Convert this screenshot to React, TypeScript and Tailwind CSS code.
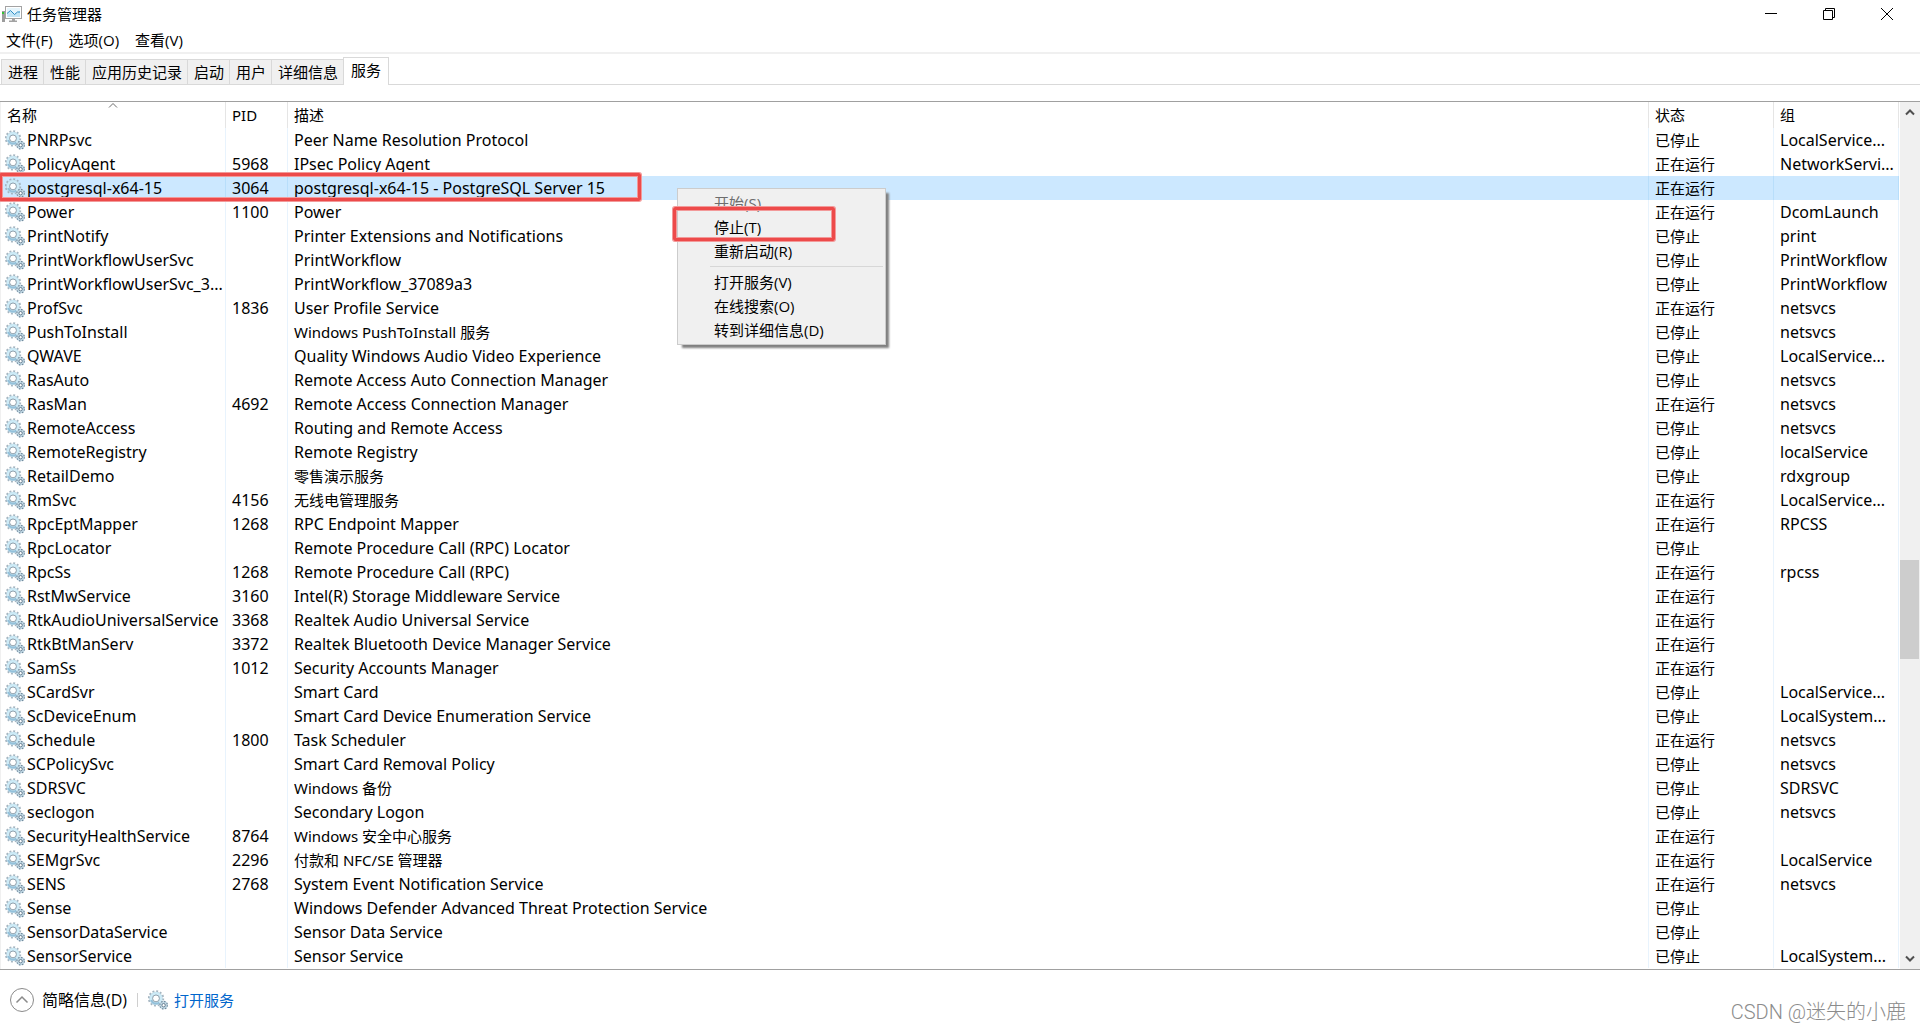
import { clsx } from "clsx";

const stopped = "已停止";
const running = "正在运行";

// name, pid, description, status, group
const services: [string, string, string, string, string][] = [
  ["PNRPsvc", "", "Peer Name Resolution Protocol", stopped, "LocalService..."],
  ["PolicyAgent", "5968", "IPsec Policy Agent", running, "NetworkServi..."],
  ["postgresql-x64-15", "3064", "postgresql-x64-15 - PostgreSQL Server 15", running, ""],
  ["Power", "1100", "Power", running, "DcomLaunch"],
  ["PrintNotify", "", "Printer Extensions and Notifications", stopped, "print"],
  ["PrintWorkflowUserSvc", "", "PrintWorkflow", stopped, "PrintWorkflow"],
  ["PrintWorkflowUserSvc_3...", "", "PrintWorkflow_37089a3", stopped, "PrintWorkflow"],
  ["ProfSvc", "1836", "User Profile Service", running, "netsvcs"],
  ["PushToInstall", "", "Windows PushToInstall 服务", stopped, "netsvcs"],
  ["QWAVE", "", "Quality Windows Audio Video Experience", stopped, "LocalService..."],
  ["RasAuto", "", "Remote Access Auto Connection Manager", stopped, "netsvcs"],
  ["RasMan", "4692", "Remote Access Connection Manager", running, "netsvcs"],
  ["RemoteAccess", "", "Routing and Remote Access", stopped, "netsvcs"],
  ["RemoteRegistry", "", "Remote Registry", stopped, "localService"],
  ["RetailDemo", "", "零售演示服务", stopped, "rdxgroup"],
  ["RmSvc", "4156", "无线电管理服务", running, "LocalService..."],
  ["RpcEptMapper", "1268", "RPC Endpoint Mapper", running, "RPCSS"],
  ["RpcLocator", "", "Remote Procedure Call (RPC) Locator", stopped, ""],
  ["RpcSs", "1268", "Remote Procedure Call (RPC)", running, "rpcss"],
  ["RstMwService", "3160", "Intel(R) Storage Middleware Service", running, ""],
  ["RtkAudioUniversalService", "3368", "Realtek Audio Universal Service", running, ""],
  ["RtkBtManServ", "3372", "Realtek Bluetooth Device Manager Service", running, ""],
  ["SamSs", "1012", "Security Accounts Manager", running, ""],
  ["SCardSvr", "", "Smart Card", stopped, "LocalService..."],
  ["ScDeviceEnum", "", "Smart Card Device Enumeration Service", stopped, "LocalSystem..."],
  ["Schedule", "1800", "Task Scheduler", running, "netsvcs"],
  ["SCPolicySvc", "", "Smart Card Removal Policy", stopped, "netsvcs"],
  ["SDRSVC", "", "Windows 备份", stopped, "SDRSVC"],
  ["seclogon", "", "Secondary Logon", stopped, "netsvcs"],
  ["SecurityHealthService", "8764", "Windows 安全中心服务", running, ""],
  ["SEMgrSvc", "2296", "付款和 NFC/SE 管理器", running, "LocalService"],
  ["SENS", "2768", "System Event Notification Service", running, "netsvcs"],
  ["Sense", "", "Windows Defender Advanced Threat Protection Service", stopped, ""],
  ["SensorDataService", "", "Sensor Data Service", stopped, ""],
  ["SensorService", "", "Sensor Service", stopped, "LocalSystem..."],
];

const tabs = ["进程", "性能", "应用历史记录", "启动", "用户", "详细信息", "服务"];
const menus = ["文件(F)", "选项(O)", "查看(V)"];
const columns = ["名称", "PID", "描述", "状态", "组"];

const hasChinese = (text: string) => /[\u4e00-\u9fff]/.test(text);

const GearsIcon = () => (
  <svg width="20" height="20" viewBox="0 0 20 20" className="shrink-0" aria-hidden="true">
    <circle cx="8" cy="8.4" r="7.2" fill="none" stroke="#a5b5c0" strokeWidth="2" strokeDasharray="1.9 1.87" />
    <circle cx="8" cy="8.4" r="5" fill="none" stroke="#b3ccda" strokeWidth="3.4" />
    <circle cx="8" cy="8.4" r="5" fill="none" stroke="#cdebf7" strokeWidth="2.6" />
    <path d="M3.2 10A5 5 0 0 0 11.2 12.4" fill="none" stroke="#93c0da" strokeWidth="2" />
    <circle cx="8" cy="8.4" r="3.4" fill="#fff" stroke="#8698a6" strokeWidth="0.9" />
    <circle cx="15.6" cy="15.2" r="4.1" fill="#c4dbe7" />
    <circle cx="15.6" cy="15.2" r="3.8" fill="none" stroke="#71899c" strokeWidth="1.2" strokeDasharray="1.5 1.484" />
    <circle cx="15.6" cy="15.2" r="1.7" fill="#fff" stroke="#647d90" strokeWidth="1" />
  </svg>
);

const AppIcon = () => (
  <svg width="20" height="20" viewBox="0 0 20 20" aria-hidden="true">
    <rect x="0" y="7" width="3" height="11" fill="#9c9c9c" />
    <rect x="0" y="8" width="2" height="2" fill="#35c435" />
    <rect x="3.5" y="2.5" width="16" height="12" fill="#fff" stroke="#a3a3a3" />
    <rect x="5" y="4" width="13" height="9" fill="#e6f5fc" />
    <path d="M5 9.5l3.5-3 4.500 4 2.500-2 2.500-1.500v6H5z" fill="#c2e5f6" />
    <path d="M5 9.500l3.500-3 4 4 3-2.500h2.500" fill="none" stroke="#2b8cc4" />
    <path d="M10 15h3v1.500h2V18H7v-1.500h3z" fill="#a3a3a3" />
  </svg>
);

const MenuItem = ({ label, disabled }: { label: string; disabled?: boolean }) => (
  <button
    role="menuitem"
    disabled={disabled}
    className="block h-6 w-full pl-[34px] text-left leading-6 disabled:text-[#6d6d6d]"
  >
    {label}
  </button>
);

const redBox =
  "pointer-events-none absolute rounded-xs border-3 border-[#ed4a4a] shadow-[0_0_0_1px_#f29a9a,inset_0_0_0_1px_#f29a9a]";

const ServiceTable = () => (
  <table className="w-full table-fixed border-separate border-spacing-0 text-left">
    <colgroup>
      <col className="w-[225px]" />
      <col className="w-[62px]" />
      <col />
      <col className="w-[125px]" />
      <col className="w-[125px]" />
    </colgroup>
    <thead>
      <tr className="h-[26px]">
        {columns.map((column, i) => (
          <th key={column} className="relative border-r border-[#e5e5e5] p-0 pl-1.5 font-normal">
            {column}
            {i === 0 && (
              <svg
                width="10"
                height="6"
                viewBox="0 0 10 6"
                className="absolute top-0 left-1/2 -translate-x-1/2"
                aria-hidden="true"
              >
                <path d="M1 5.5l4-4 4 4" fill="none" stroke="#6d6d6d" />
              </svg>
            )}
          </th>
        ))}
      </tr>
    </thead>
    <tbody>
      {services.map(([name, pid, description, status, group]) => {
        const cell = clsx(
          "h-6 overflow-hidden border-r p-0 pl-1.5 leading-6 whitespace-nowrap",
          name === "postgresql-x64-15" ? "border-[#b8defb] bg-[#cce8ff]" : "border-[#e8f3fd]"
        );
        return (
          <tr key={name}>
            <td className={clsx(cell, "text-base")}>
              <div className="-ml-0.5 flex h-6 items-center gap-0.5">
                <GearsIcon />
                {name}
              </div>
            </td>
            <td className={clsx(cell, "text-base")}>{pid}</td>
            <td className={clsx(cell, !hasChinese(description) && "text-base")}>{description}</td>
            <td className={cell}>{status}</td>
            <td className={clsx(cell, "text-base")}>{group}</td>
          </tr>
        );
      })}
    </tbody>
  </table>
);

const ScrollBar = () => (
  <div className="ml-px flex w-5 flex-col bg-[#f0f0f0] pr-px">
    <button aria-label="向上滚动" className="flex h-5 items-center justify-center">
      <svg width="10" height="8" viewBox="0 0 10 8">
        <path d="M1 6.5l4-4 4 4" fill="none" stroke="#505050" strokeWidth="2" />
      </svg>
    </button>
    <div className="grow-[438]" />
    <div className="h-[99px] bg-[#cdcdcd]" />
    <div className="grow-[290]" />
    <button aria-label="向下滚动" className="flex h-5 items-center justify-center">
      <svg width="10" height="8" viewBox="0 0 10 8">
        <path d="M1 1.5l4 4 4-4" fill="none" stroke="#505050" strokeWidth="2" />
      </svg>
    </button>
  </div>
);

const App = () => {
  return (
    <div className="flex min-h-screen flex-col bg-white font-['Noto_Sans','Noto_Sans_CJK_SC',sans-serif] text-[15px] leading-5 text-black">
      <header className="flex h-7 items-center pl-0.5">
        <AppIcon />
        <h1 className="ml-[5px]">任务管理器</h1>
        <div className="ml-auto flex h-7 pr-1">
          <button aria-label="最小化" className="flex w-[58px] items-center justify-center">
            <svg width="12" height="12" viewBox="0 0 12 12">
              <path d="M0 5.5h12" stroke="#000" />
            </svg>
          </button>
          <button aria-label="还原" className="flex w-[58px] items-center justify-center">
            <svg width="12" height="12" viewBox="0 0 12 12" fill="none" stroke="#000">
              <path d="M.5 2.5h9v9h-9zM2.5 2.5v-2h9v9h-2" />
            </svg>
          </button>
          <button aria-label="关闭" className="flex w-[58px] items-center justify-center">
            <svg width="12" height="12" viewBox="0 0 12 12">
              <path d="M0 0l12 12M12 0L0 12" stroke="#000" />
            </svg>
          </button>
        </div>
      </header>

      <nav className="flex h-[26px] items-center gap-4 border-b-2 border-[#f0f0f0] pl-1.5 font-['Open_Sans','Noto_Sans_CJK_SC',sans-serif]">
        {menus.map((menu) => (
          <button key={menu}>{menu}</button>
        ))}
      </nav>

      <div role="tablist" className="flex h-[31px] items-end border-b border-[#d9d9d9] pl-px">
        {tabs.map((tab, i) => (
          <button
            key={tab}
            role="tab"
            aria-selected={i === 6}
            className={clsx(
              "border-t border-l border-[#d9d9d9]",
              i === 6 ? "-mb-px h-7 border-r bg-white px-[7px] pb-1" : "h-[25px] bg-[#f0f0f0] pr-[5px] pl-1.5"
            )}
          >
            {tab}
          </button>
        ))}
      </div>

      <main className="relative mt-4 flex border-y border-[#a0a0a0]">
        <div className="min-w-0 flex-1 border-l border-[#f0f0f0] pb-px">
          <ServiceTable />
        </div>
        <ScrollBar />

        <div
          role="menu"
          className="absolute top-[86px] left-[677px] w-[209px] border border-[#ccc] bg-[#f0f0f0] p-0.5 font-['Open_Sans','Noto_Sans_CJK_SC',sans-serif] shadow-[4px_4px_2px_-1px_#808080]"
        >
          <MenuItem label="开始(S)" disabled />
          <MenuItem label="停止(T)" />
          <MenuItem label="重新启动(R)" />
          <div className="my-[3px] ml-[30px] h-px bg-[#d7d7d7]" />
          <MenuItem label="打开服务(V)" />
          <MenuItem label="在线搜索(O)" />
          <MenuItem label="转到详细信息(D)" />
        </div>

        <div className={clsx(redBox, "top-[71px] -left-px h-7 w-[642px]")} />
        <div className={clsx(redBox, "top-[105px] left-[673px] h-[34px] w-[162px]")} />
      </main>

      <footer className="flex flex-1 items-center pr-[14px] pl-2.5">
        <button className="flex items-center gap-2 font-['Open_Sans','Noto_Sans_CJK_SC',sans-serif] text-base">
          <svg width="24" height="24" viewBox="0 0 24 24" fill="none">
            <circle cx="12" cy="12" r="11.5" stroke="#8a8a8a" />
            <path d="M6.5 14.5L12 9l5.5 5.5" stroke="#8a8a8a" strokeWidth="1.5" />
          </svg>
          简略信息(D)
        </button>
        <div className="ml-2.5 h-3.5 w-px bg-[#cfcfcf]" />
        <a href="#" className="ml-2.5 flex items-center gap-1.5 text-[#0066cc]">
          <GearsIcon />
          打开服务
        </a>
        <span className="mt-6 ml-auto font-[Roboto,'Noto_Sans_CJK_SC',sans-serif] text-xl font-light text-[#8c8c8c]">
          CSDN @迷失的小鹿
        </span>
      </footer>
    </div>
  );
};

export default App;
